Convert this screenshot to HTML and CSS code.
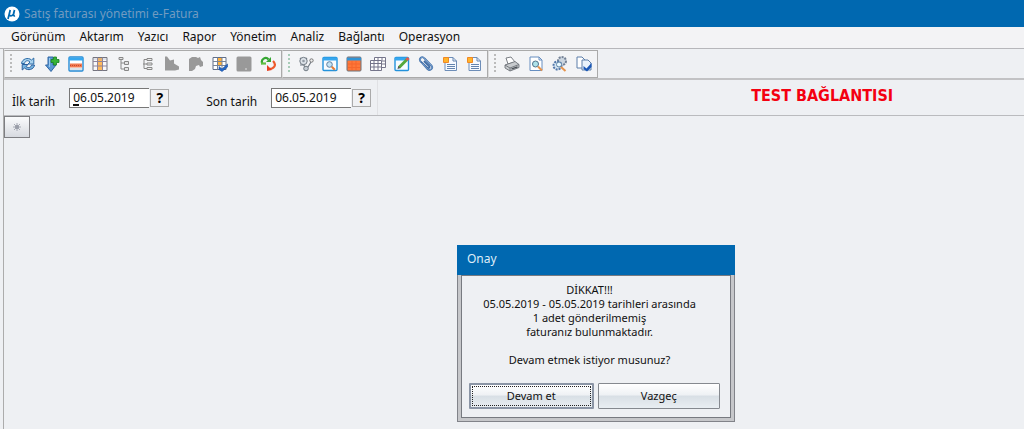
FILE: index.html
```html
<!DOCTYPE html>
<html lang="tr">
<head>
<meta charset="utf-8">
<title>Satış faturası yönetimi e-Fatura</title>
<link rel="stylesheet" href="styles.css">
</head>
<body>
<div class="window">
  <header class="titlebar">
    <svg class="logo" viewBox="0 0 16 16" aria-hidden="true"><circle cx="8" cy="8" r="7.5" fill="#fff"/><path d="M6.2 4 4 13M6.2 4 5.3 8.2C5 10.5 8.6 10.5 9.4 8L10.5 4 9.5 8.5Q9.2 10.3 11 9.7" fill="none" stroke="#0068b0" stroke-width="1.7"/></svg>
    <h1 class="window-title">Satış faturası yönetimi e-Fatura</h1>
  </header>
  <nav class="menubar" aria-label="Menü">
    <button class="menu-item">Görünüm</button>
    <button class="menu-item">Aktarım</button>
    <button class="menu-item">Yazıcı</button>
    <button class="menu-item">Rapor</button>
    <button class="menu-item">Yönetim</button>
    <button class="menu-item">Analiz</button>
    <button class="menu-item">Bağlantı</button>
    <button class="menu-item">Operasyon</button>
  </nav>
  <div class="workspace">
    <div class="toolbar" role="toolbar" aria-label="Araçlar">
      <div class="tool-group">
        <span class="grip"></span>
        <button class="tool" aria-label="Yenile"><svg viewBox="0 0 16 16"><path d="M1.5 7.5C2 3 8 .8 11.5 4L13.800 2v6H8l2-2C7.500 3.500 5 5 4.500 7.500z" fill="#a9d2ee" stroke="#2e6da8"/><path d="M14.500 9C14 13.500 8 15.200 4.500 12L2.200 14V8.500H8l-2 2C8.500 12.500 11 11.500 11.500 9z" fill="#77b6e2" stroke="#2e5f9c"/></svg></button>
        <button class="tool" aria-label="İçeri al"><svg viewBox="0 0 16 16"><path d="M4 1h5v8h3l-5 6.500L1.500 9H4z" fill="#5b98d2" stroke="#2e65a4"/><path d="M5.500 2v9" stroke="#9bcaf0"/><path d="M9.500 1h3v2.500H15v3h-2.500V9h-3V6.500H7v-3h2.500z" fill="#36b336" stroke="#177d25" stroke-width=".8"/></svg></button>
        <button class="tool" aria-label="Satır görünümü"><svg viewBox="0 0 16 16"><rect x="1" y="1" width="14" height="14" rx="1" fill="#fff" stroke="#278bd4" stroke-width="1.400"/><path d="M1 3h14" stroke="#36a7ee" stroke-width="3"/><path d="M2 7.500h12v4H2z" fill="#f07950"/><path d="M2 9.500h12" stroke="#c9482c" stroke-dasharray="1 1"/><path d="M2 13h12" stroke="#b9c6d1"/></svg></button>
        <button class="tool" aria-label="Sütun görünümü"><svg viewBox="0 0 16 16"><path d="M1 1.500h14v13H1z" fill="#f8f8fa" stroke="#74747e"/><path d="M5.500 2h5v12h-5z" fill="#ffb85b"/><path d="M1 5.500h14M1 10h14M5.500 1.500v13M10.500 1.500v13" stroke="#90859a"/><path d="M1 3h14" stroke="#9aa4b8" opacity=".5"/></svg></button>
        <button class="tool" aria-label="Ağacı aç"><svg viewBox="0 0 16 16" fill="#e5e5e5" stroke="#888"><path d="M3 1.500h4v2H3zM8.500 5.500h4v3h-4zM8.500 11.500h4v3h-4z"/><path d="M5 4v9h3M5 7h3" fill="none"/></svg></button>
        <button class="tool" aria-label="Ağacı kapat"><svg viewBox="0 0 16 16" fill="#eee" stroke="#888"><path d="M7 2.500h5v2H7zM7 7h5v2H7zM7 11.500h5v2H7z"/><path d="M7 3.500H4v9h3M3 8h4" fill="none"/></svg></button>
        <button class="tool" aria-label="Dışa aktar" disabled><svg viewBox="0 0 16 16"><path d="M1 .5h2l3 4 4-1v4l5 3v3l-4 1H1z" fill="#999"/></svg></button>
        <button class="tool" aria-label="Gönder" disabled><svg viewBox="0 0 16 16"><path d="M1 3 4 1h4l2 1 2-1 1 3 2 2v4l-3 1-1-2-3 1-1 3-3 2H1z" fill="#999"/></svg></button>
        <button class="tool" aria-label="Seç"><svg viewBox="0 0 16 16"><path d="M1 1.500h13v12H1z" fill="#fff" stroke="#606e88"/><path d="M6 2h4v8H6z" fill="#ffb13c"/><path d="M1 5.500h13M1 9.500h13M5.500 1.500v12M10 1.500v12" stroke="#788396"/><path d="M7 10.500l3 2.500 5.500-5v3L10 15.500l-3-2z" fill="#2266c9" stroke="#164b9a" stroke-width=".6"/></svg></button>
        <button class="tool" aria-label="Kaydet" disabled><svg viewBox="0 0 16 16"><rect x=".5" y=".5" width="15" height="15" rx="1.500" fill="#999"/><path d="M10 12v2" stroke="#ddd"/></svg></button>
        <button class="tool" aria-label="Eşitle"><svg viewBox="0 0 16 16" fill="none" stroke-width="2.200"><path d="M2.500 8C0 3 6 0 8.500 3.500" stroke="#35a632"/><path d="M11 1v5H6z" fill="#35a632"/><path d="M1 7.500h5" stroke="#61bf43"/><path d="M13 5c4 4 1 8-4 8" stroke="#ed5a2b"/><path d="M7 9v6l5-1z" fill="#e84223"/></svg></button>
      </div>
      <div class="tool-group tool-group-green">
        <span class="grip"></span>
        <button class="tool" aria-label="Akış"><svg viewBox="0 0 16 16"><circle cx="5.500" cy="5" r="3.700" fill="#dce2e8" stroke="#737c85"/><circle cx="5.500" cy="5" r="1.300" fill="#929ba4"/><path d="M2 2l1 1M9 2 8 3M2 9h4l1 3 3-1 3-5" fill="none" stroke="#737c85" stroke-width="1.200"/><circle cx="8" cy="12.500" r="2.300" fill="#c6ced5" stroke="#737c85"/><circle cx="13.500" cy="4.500" r="1.700" fill="#eee" stroke="#777"/></svg></button>
        <button class="tool" aria-label="Pencerede bul"><svg viewBox="0 0 16 16"><rect x="1" y="1.500" width="14" height="13" rx="1" fill="#f8fcff" stroke="#2392dc" stroke-width="1.400"/><path d="M1 3h14" stroke="#36a7ee" stroke-width="3"/><circle cx="7.500" cy="8.500" r="2.800" fill="#c4e4f5" stroke="#617fa0"/><path d="M9.800 10.800l3 3" stroke="#e57a35" stroke-width="2"/></svg></button>
        <button class="tool" aria-label="Pencere"><svg viewBox="0 0 16 16"><rect x="1" y="1" width="14" height="14" rx="1" fill="#ff7738" stroke="#6b7179"/><path d="M1 3h14" stroke="#3094d6" stroke-width="3"/><path d="M2 8h12M2 11.500h12M6 5v9M10 5v9" stroke="#ed5923" opacity=".5"/></svg></button>
        <button class="tool" aria-label="Tablolar"><svg viewBox="0 0 16 16" fill="#fff" stroke="#75758a"><path d="M4.500 1.500h11v10h-11z"/><path d="M.500 4.500h11v10H.500zM.500 7.500h11M.500 11h11M4 4.500v10M8 4.500v10M12 5h3.500M12 8h3.500M8 1.500v3M12 1.500v3"/></svg></button>
        <button class="tool" aria-label="Düzenle"><svg viewBox="0 0 16 16"><rect x="1" y="1.500" width="13.500" height="13" rx="1" fill="#f8fcff" stroke="#2392dc" stroke-width="1.400"/><path d="M1 3h13.500" stroke="#36a7ee" stroke-width="3"/><path d="M5 11.500 13 3.500" stroke="#55a83b" stroke-width="3"/><path d="M12.500 4 14.500 2" stroke="#e65b4b" stroke-width="3"/><path d="M3.500 13l.8-3 2.200 2z" fill="#555"/></svg></button>
        <button class="tool" aria-label="Ekler"><svg viewBox="0 0 16 16" fill="none"><path id="clip" d="M4.500 7.500l5 5.500c3 2.500 6-1 4-3.500L6.500 2.500C4-.5.500 2.500 2.500 5.500l7 6.500c2 .5 2.500-1 1.500-2L6 5" stroke="#3f6ca5" stroke-width="1.800"/><path d="M4.500 7.500l5 5.500c3 2.500 6-1 4-3.500L6.500 2.500C4-.5.500 2.500 2.500 5.500" stroke="#8eb8e2" stroke-width=".7"/></svg></button>
        <button class="tool" aria-label="Yeni belge"><svg viewBox="0 0 16 16"><path d="M3 1.500h8L14.500 5v9.500H3z" fill="#f7faff" stroke="#6e8eb8"/><path d="M11 1.500V5h3.500M5 8.500h8M5 10.500h8M5 12.500h8" fill="none" stroke="#6484ae"/><path d="M1.500 1.500h5v5h-5z" fill="#ffb52b" stroke="#f18824"/></svg></button>
        <button class="tool" aria-label="Yeni fatura"><svg viewBox="0 0 16 16"><path d="M3 1.500h8L14.500 5v9.500H3z" fill="#f7faff" stroke="#6e8eb8"/><path d="M11 1.500V5h3.500M5 8.500h8M5 10.500h8M5 12.500h8" fill="none" stroke="#6484ae"/><path d="M1.500 1.500h5v5h-5z" fill="#ffb52b" stroke="#f18824"/></svg></button>
      </div>
      <div class="tool-group">
        <span class="grip"></span>
        <button class="tool" aria-label="Yazdır"><svg viewBox="0 0 16 16" stroke="#6d7278" stroke-width=".9"><path d="M4 8 2 2l5-1 4 5z" fill="#fff"/><path d="M1 9 11 5.500l4 3v3L6 15l-5-3z" fill="#c8cbce"/><path d="M1 9l5 3 9-3.500M6 12v3" fill="none"/><path d="M7.500 13l6-2.200" stroke="#484d53" stroke-width="1.300"/></svg></button>
        <button class="tool" aria-label="Baskı önizleme"><svg viewBox="0 0 16 16"><path d="M2 1h9l3 3v10.500H2z" fill="#fff" stroke="#668ec0"/><path d="M11 1v3h3" fill="none" stroke="#668ec0"/><circle cx="7.500" cy="8" r="3" fill="#aee2e9" stroke="#50728a"/><path d="M10 10.500l4 4" stroke="#e7944c" stroke-width="2"/></svg></button>
        <button class="tool" aria-label="Ayarlarda bul"><svg viewBox="0 0 16 16"><circle cx="10" cy="5" r="4" fill="#ccd6e0" stroke="#738195" stroke-width="2" stroke-dasharray="2 1"/><circle cx="5.500" cy="9.500" r="4" fill="#d5e5f2" stroke="#5278aa" stroke-width="2" stroke-dasharray="2 1"/><circle cx="7" cy="8.500" r="2.500" fill="#eaf9ff" stroke="#5d83a5"/><path d="M9 11l4.500 4" stroke="#e7944c" stroke-width="2"/></svg></button>
        <button class="tool" aria-label="Kopyaları onayla"><svg viewBox="0 0 16 16"><path d="M1 1h5l3 3v8H1z" fill="#fff" stroke="#5d7eaa"/><path d="M6 4h6l3 3v7H6z" fill="#e8f2fc" stroke="#5d7eaa"/><path d="M7.500 10l3 2.500L15.500 7v4L11 15.500 7.500 13z" fill="#1957b7"/></svg></button>
      </div>
    </div>
    <form class="filters">
      <div class="date-fields">
        <div class="field">
          <label for="first-date">İlk tarih</label>
          <div class="date-control"><input class="date" id="first-date" type="text" value="06.05.2019"><span class="caret"></span><button class="help" type="button" aria-label="İlk tarih seç">?</button></div>
        </div>
        <div class="field">
          <label for="last-date">Son tarih</label>
          <div class="date-control"><input class="date" id="last-date" type="text" value="06.05.2019"><button class="help" type="button" aria-label="Son tarih seç">?</button></div>
        </div>
      </div>
      <strong class="notice">TEST BAĞLANTISI</strong>
    </form>
    <main class="content">
      <button class="grid-button" aria-label="Sütunlar"><svg viewBox="0 0 8 8" fill="none" stroke="#9599a4"><circle cx="4" cy="4" r="1.500"/><path d="M4 0v8M0 4h8M1 1l6 6M7 1 1 7" stroke-width=".8"/></svg></button>
    </main>
  </div>
  <section class="dialog" role="dialog" aria-labelledby="dialog-title">
    <h2 class="dialog-title" id="dialog-title">Onay</h2>
    <div class="dialog-body">
      <div class="message">
        <p>DİKKAT!!!</p>
        <p>05.05.2019 - 05.05.2019 tarihleri arasında</p>
        <p>1 adet gönderilmemiş</p>
        <p>faturanız bulunmaktadır.</p>
        <p class="question">Devam etmek istiyor musunuz?</p>
      </div>
      <div class="actions">
        <button class="action action-default">Devam et</button>
        <button class="action">Vazgeç</button>
      </div>
    </div>
  </section>
</div>
</body>
</html>
```
FILE: styles.css
```css
* { box-sizing: border-box; }
body {
  margin: 0;
  background: #eef0f3;
  color: #111;
  font: 12px/14px "Noto Sans", "Open Sans", sans-serif;
}
button, input { font: inherit; color: inherit; }
button { padding: 0; }
.window {
  position: relative;
  display: flex;
  flex-direction: column;
  min-height: 100vh;
}
.titlebar {
  display: flex;
  align-items: center;
  gap: 4px;
  height: 27px;
  padding-left: 4px;
  background: #0068b0;
}
.logo { width: 16px; height: 16px; }
.window-title {
  margin: 0;
  color: #719bc0;
  font-size: 12px;
  font-weight: 400;
}
.menubar {
  display: flex;
  gap: 14px;
  height: 22px;
  padding: 0 11px 2px;
  background: #f3f3f5;
  border-bottom: 1px solid #b6b6ba;
}
.menu-item { border: 0; background: none; }
.workspace {
  display: flex;
  flex: 1;
  flex-direction: column;
  margin-left: 3px;
  border-left: 1px solid #acacac;
}
.toolbar {
  display: flex;
  height: 31px;
  padding-top: 1px;
  border-bottom: 2px solid #c2c2c4;
}
.tool-group {
  display: flex;
  align-items: center;
  padding: 0 1px 0 5px;
  background: #f3f4f6;
  border: 1px solid #aaa;
  border-left-color: #ddd;
}
.grip {
  width: 2px;
  height: 20px;
  margin-right: 4px;
  background: repeating-linear-gradient(#bbb 0 2px, transparent 2px 4px);
}
.tool-group-green .grip { background: repeating-linear-gradient(#a8ccb8 0 2px, transparent 2px 4px); }
.tool {
  display: flex;
  align-items: center;
  justify-content: center;
  width: 24px;
  height: 24px;
  border: 0;
  background: none;
}
.tool svg { width: 16px; height: 16px; }
.filters {
  display: flex;
  height: 36px;
  border-bottom: 1px solid #babbbe;
}
.date-fields {
  display: flex;
  gap: 37px;
  padding: 8px 6px 0 8px;
  border-right: 1px solid #e0e1e4;
}
.field { display: flex; gap: 14px; }
.field label { padding-top: 7px; }
.date-control {
  position: relative;
  display: flex;
  gap: 1px;
}
.date {
  width: 80px;
  height: 20px;
  padding: 0 3px 1px;
  border: 1px solid #777;
  border-right: 0;
  background: #fff;
  outline: 0;
}
.caret {
  position: absolute;
  top: 16px;
  left: 4px;
  width: 6px;
  height: 2px;
  background: #111;
}
.help {
  width: 19px;
  height: 18px;
  margin-top: 1px;
  border: 1px solid #aaa;
  background: #f0f1f3;
  color: #000;
  font-size: 14px;
  font-weight: 700;
}
.notice {
  flex: 1;
  padding: 6px 0 0 373px;
  color: #f40010;
  font: 700 16px/20px "DejaVu Sans Condensed", "DejaVu Sans", sans-serif;
}
.content { flex: 1; }
.grid-button {
  display: flex;
  align-items: center;
  justify-content: center;
  width: 26px;
  height: 22px;
  border: 1px solid #7d7e82;
  background: linear-gradient(#fafbfc, #d7dae0);
}
.grid-button svg { width: 8px; height: 8px; }
.dialog {
  position: absolute;
  top: 245px;
  left: 457px;
  width: 278px;
  border: 1px solid #818389;
  background: #c6c7ca;
  font-size: 11px;
}
.dialog-title {
  margin: -1px -1px 0;
  padding: 7px 10px 9px;
  background: #0068b0;
  color: #dfedf8;
  font-size: 12px;
  font-weight: 400;
}
.dialog-body {
  margin: 0 3px 3px;
  padding: 7px 10px 8px 7px;
  border: 1px solid #777a80;
  background: #eef0f3;
}
.message {
  margin: 0 10px 16px 0;
  text-align: center;
}
.message p { margin: 0; }
.message .question { margin-top: 14px; }
.actions { display: flex; gap: 4px; }
.action {
  flex: 1;
  height: 26px;
  border: 1px solid #85898f;
  border-radius: 1px;
  background: linear-gradient(#fff, #eef1f4 46%, #d8dfe5 50%, #e9eef2);
}
.action-default {
  border: 2px solid #8b95a5;
  outline: 1px dotted #222;
  outline-offset: -4px;
}
```
